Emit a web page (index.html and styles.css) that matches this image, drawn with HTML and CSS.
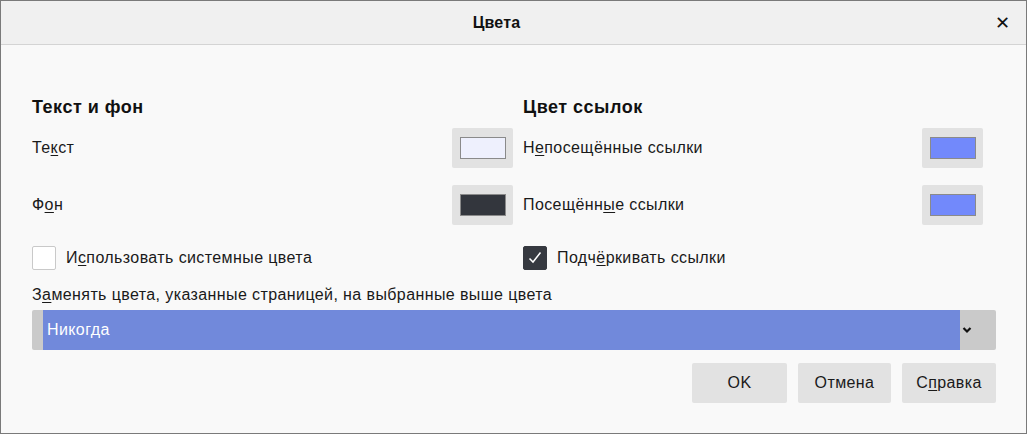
FILE: index.html
```html
<!DOCTYPE html>
<html lang="ru">
<head>
  <meta charset="UTF-8">
  <title>Цвета</title>
  <link rel="stylesheet" href="styles.css">
</head>
<body>
  <div class="dialog">
    <div class="titlebar">
      <span class="title">Цвета</span>
      <span class="close">&#x2715;</span>
    </div>
    <div class="content">
      <div class="columns">
        <div class="col col-left">
          <h2>Текст и фон</h2>
          <div class="row">
            <span>Те<u>к</u>ст</span>
            <button class="swatch"><span class="chip" style="background:#eef0fd"></span></button>
          </div>
          <div class="row">
            <span>Ф<u>о</u>н</span>
            <button class="swatch"><span class="chip" style="background:#33363d"></span></button>
          </div>
          <label class="check">
            <span class="box"></span>
            <span>И<u>с</u>пользовать системные цвета</span>
          </label>
        </div>
        <div class="col col-right">
          <h2>Цвет ссылок</h2>
          <div class="row">
            <span>Н<u>е</u>посещённые ссылки</span>
            <button class="swatch"><span class="chip" style="background:#7289fb"></span></button>
          </div>
          <div class="row">
            <span>Посещённ<u>ы</u>е ссылки</span>
            <button class="swatch"><span class="chip" style="background:#7289fb"></span></button>
          </div>
          <label class="check">
            <span class="box checked">
              <svg width="16" height="16" viewBox="0 0 16 16"><path d="M2.5 8.5 L6 12 L13.5 2.5" fill="none" stroke="#fff" stroke-width="1.5"/></svg>
            </span>
            <span>Подч<u>ё</u>ркивать ссылки</span>
          </label>
        </div>
      </div>

      <div class="replace-label">З<u>а</u>менять цвета, указанные страницей, на выбранные выше цвета</div>
      <div class="select">
        <div class="select-value">Никогда</div>
        <div class="select-arrow">
          <svg width="10" height="8" viewBox="0 0 10 8"><path d="M1.5 2 L5 5.5 L8.5 2" fill="none" stroke="#111" stroke-width="2.2"/></svg>
        </div>
      </div>

      <div class="buttons">
        <button class="btn btn-ok">OK</button>
        <button class="btn btn-cancel">Отмена</button>
        <button class="btn btn-help">С<u>п</u>равка</button>
      </div>
    </div>
  </div>
</body>
</html>
```

FILE: styles.css
```css
html, body { margin: 0; padding: 0; }
body { font-family: "Liberation Sans", Arial, sans-serif; font-size: 16px; letter-spacing: 0.4px; color: #1a1a1a; background: #f9f9f9; }
u { text-decoration-thickness: 1px; text-underline-offset: 2px; }

.dialog { width: 1027px; height: 434px; box-sizing: border-box; border: 1px solid #7a7a7a; background: #f9f9f9; }

.titlebar { height: 43px; background: #f0f0f0; border-bottom: 1px solid #d4d4d4; display: flex; align-items: center; justify-content: center; padding-right: 34px; position: relative; }
.title { font-weight: bold; font-size: 16px; letter-spacing: 0.2px; color: #111; }
.close { position: absolute; right: 16px; top: 11px; font-size: 18px; color: #111; }

.content { padding: 51px 30px 0 31px; }

.columns { display: grid; grid-template-columns: 491px 1fr; }
.col h2 { font-size: 18px; font-weight: bold; letter-spacing: 0.5px; margin: 0 0 10px; color: #111; line-height: 22px; }
.row { display: flex; align-items: center; justify-content: space-between; height: 40px; margin-bottom: 17px; }
.col-left .row { padding-right: 10px; }
.col-right .row { padding-right: 13px; }

.swatch { width: 61px; height: 40px; background: #e2e2e2; border: none; border-radius: 2px; padding: 0; display: flex; align-items: center; justify-content: center; }
.chip { width: 44px; height: 20px; border: 1px solid #8a8a8a; display: block; }

.check { display: flex; align-items: center; height: 24px; gap: 10px; margin-top: 21px; }
.box { width: 22px; height: 22px; border: 1px solid #c9c9c9; border-radius: 2px; background: #fff; display: flex; align-items: center; justify-content: center; }
.box.checked { background: #363940; border-color: #363940; }

.replace-label { margin-top: 16px; line-height: 18px; }

.select { margin-top: 6px; height: 40px; background: #cacaca; border-radius: 2px; display: flex; padding-left: 11px; }
.select-value { flex: 1; background: #7189db; color: #fff; line-height: 40px; padding-left: 4px; }
.select-arrow { width: 36px; display: flex; align-items: center; padding-left: 2px; box-sizing: border-box; }

.buttons { display: flex; justify-content: flex-end; gap: 11px; margin-top: 13px; }
.btn { height: 40px; padding: 0; background: #e2e2e2; border: none; border-radius: 2px; font-family: inherit; font-size: 16px; letter-spacing: 0.4px; color: #1a1a1a; }
.btn-ok { width: 95px; }
.btn-cancel { width: 93px; }
.btn-help { width: 94px; }
```
